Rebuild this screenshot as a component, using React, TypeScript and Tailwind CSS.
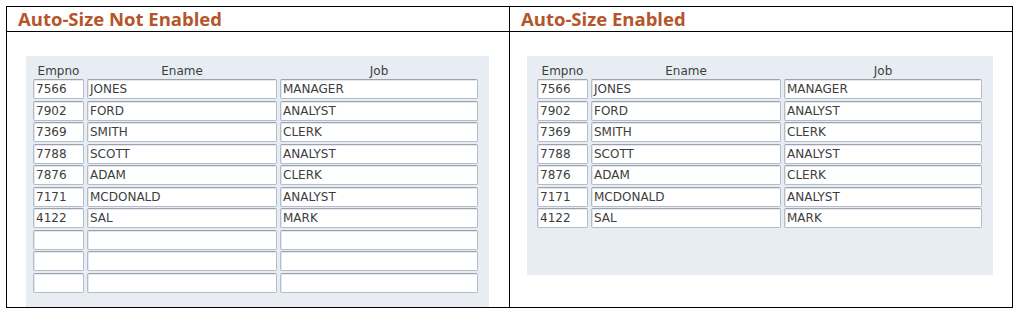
import React from 'react';

type Emp = { empno: string; ename: string; job: string };

const emps: Emp[] = [
  { empno: '7566', ename: 'JONES', job: 'MANAGER' },
  { empno: '7902', ename: 'FORD', job: 'ANALYST' },
  { empno: '7369', ename: 'SMITH', job: 'CLERK' },
  { empno: '7788', ename: 'SCOTT', job: 'ANALYST' },
  { empno: '7876', ename: 'ADAM', job: 'CLERK' },
  { empno: '7171', ename: 'MCDONALD', job: 'ANALYST' },
  { empno: '4122', ename: 'SAL', job: 'MARK' },
];

const Field = ({ value, width }: { value: string; width: string }) => (
  <div
    className={`${width} h-[20px] bg-white border border-[#b3bcc8] border-t-[#9aa4b1] rounded-[2px] pl-[2px] text-[12px] leading-[18px] text-[#3d3d3d] shadow-[inset_1px_1px_0_#e4e8ee] overflow-hidden whitespace-nowrap`}
  >
    {value}
  </div>
);

const EmpForm = ({ rows, box }: { rows: (Emp | null)[]; box: string }) => (
  <div className={`${box} bg-[#e8edf4] pt-[8px]`}>
    <div className="flex gap-[3px] text-[12px] text-[#3d3d3d] leading-[14px] h-[14px]">
      <div className="w-[51px] text-center">Empno</div>
      <div className="w-[190px] text-center">Ename</div>
      <div className="w-[198px] text-center">Job</div>
    </div>
    <div className="flex flex-col gap-[1.5px] mt-[1px]">
      {rows.map((r, i) => (
        <div key={i} className="flex gap-[3px]">
          <Field width="w-[51px]" value={r ? r.empno : ''} />
          <Field width="w-[190px]" value={r ? r.ename : ''} />
          <Field width="w-[198px]" value={r ? r.job : ''} />
        </div>
      ))}
    </div>
  </div>
);

export default function App() {
  const fixedRows: (Emp | null)[] = [...emps, null, null, null];
  return (
    <div className="w-[1018px] h-[318px] bg-white pt-[6px] pl-[6px]" style={{ fontFamily: '"DejaVu Sans", sans-serif' }}>
      <div className="w-[1007px] border border-black grid grid-cols-[503px_502px]">
        <div className="h-[25px] border-r border-b border-black pl-[11px] flex items-center">
          <h2 className="text-[18.5px] font-bold text-[#b5552a] leading-none" style={{ fontFamily: '"Open Sans", sans-serif' }}>
            Auto-Size Not Enabled
          </h2>
        </div>
        <div className="h-[25px] border-b border-black pl-[11px] flex items-center">
          <h2 className="text-[18.5px] font-bold text-[#b5552a] leading-none" style={{ fontFamily: '"Open Sans", sans-serif' }}>
            Auto-Size Enabled
          </h2>
        </div>
        <div className="h-[275px] border-r border-black pt-[24px]">
          <EmpForm rows={fixedRows} box="ml-[19px] w-[463px] h-[251px] pl-[7px]" />
        </div>
        <div className="h-[275px] pt-[24px]">
          <EmpForm rows={emps} box="ml-[17px] w-[466px] h-[219px] pl-[10px]" />
        </div>
      </div>
    </div>
  );
}
